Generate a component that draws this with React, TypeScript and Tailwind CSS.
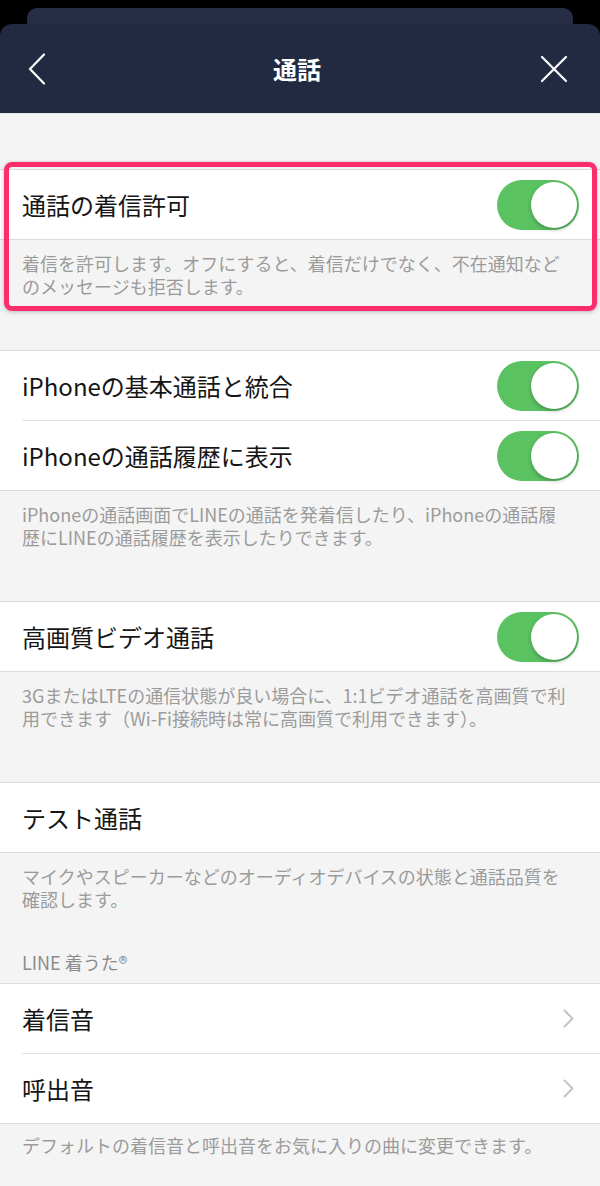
import type { FC, ReactNode } from 'react';

const FONT = "font-['Noto_Sans_CJK_JP','Noto_Sans',sans-serif]";

const Toggle: FC = () => (
  <div className="w-[82px] h-[50px] rounded-full bg-[#5bc262] relative flex-shrink-0">
    <div className="absolute right-[2px] top-[2px] w-[46px] h-[46px] rounded-full bg-white shadow-[0_2px_4px_rgba(0,0,0,0.25)]" />
  </div>
);

const Chevron: FC = () => (
  <svg width="11" height="19" viewBox="0 0 11 19" fill="none" className="flex-shrink-0">
    <path d="M1.5 1.5l8 8-8 8" stroke="#c4c4c8" strokeWidth="2" strokeLinecap="round" strokeLinejoin="round" />
  </svg>
);

const Row: FC<{ label: string; right?: ReactNode; chevron?: boolean }> = ({ label, right, chevron }) => (
  <div className={`h-[69px] flex items-center justify-between pl-[22px] ${chevron ? 'pr-[26px]' : 'pr-[21px]'}`}>
    <span className="text-[24px] text-[#151515] leading-none">{label}</span>
    {right}
  </div>
);

const Sep: FC = () => <div className="ml-[22px] h-px bg-[#e2e2e2]" />;

const Section: FC<{ children: ReactNode }> = ({ children }) => (
  <div className="bg-white border-y border-[#dcdcdc]">{children}</div>
);

const Footer: FC<{ lines: string[]; pb?: string }> = ({ lines, pb = 'pb-[52px]' }) => (
  <div className={`px-[22px] pt-[12px] ${pb} text-[18px] leading-[23px] text-[#9b9b9b]`}>
    {lines.map((l, i) => (
      <p key={i} className="whitespace-nowrap h-[23px]">{l}</p>
    ))}
  </div>
);

export default function App() {
  return (
    <div className={`w-[600px] h-[1186px] bg-black overflow-hidden ${FONT}`}>
      {/* stacked sheet behind */}
      <div className="pt-[8px]">
        <div className="mx-[27px] h-[16px] rounded-t-[10px] bg-[#272d47]" />
      </div>

      {/* header */}
      <div className="h-[90px] rounded-t-[12px] bg-[#222a42] flex items-center justify-between px-[28px] border-b border-[#e4e9f0]">
        <svg width="20" height="32" viewBox="0 0 20 32" fill="none">
          <path d="M16 1.5L2 16l14 14.5" stroke="white" strokeWidth="2.2" strokeLinecap="round" strokeLinejoin="round" />
        </svg>
        <h1 className="text-white font-bold text-[24px] leading-none ml-[6px]">通話</h1>
        <svg width="28" height="28" viewBox="0 0 28 28" fill="none" className="mr-[4px]">
          <path d="M2 2l24 24M26 2L2 26" stroke="white" strokeWidth="2.2" strokeLinecap="round" />
        </svg>
      </div>

      {/* content */}
      <div className="bg-[#f4f4f4] pt-[55px] h-full">
        <div className="relative">
          <Section>
            <Row label="通話の着信許可" right={<Toggle />} />
          </Section>
          <Footer lines={['着信を許可します。オフにすると、着信だけでなく、不在通知など', 'のメッセージも拒否します。']} />
          {/* highlight frame */}
          <div className="absolute top-[-7px] left-[4px] right-[3px] h-[149px] border-[5px] border-[#fc2d6b] rounded-[8px] shadow-[0_1px_4px_rgba(0,0,0,0.25)]" />
        </div>

        <Section>
          <Row label="iPhoneの基本通話と統合" right={<Toggle />} />
          <Sep />
          <Row label="iPhoneの通話履歴に表示" right={<Toggle />} />
        </Section>
        <Footer lines={['iPhoneの通話画面でLINEの通話を発着信したり、iPhoneの通話履', '歴にLINEの通話履歴を表示したりできます。']} />

        <Section>
          <Row label="高画質ビデオ通話" right={<Toggle />} />
        </Section>
        <Footer lines={['3GまたはLTEの通信状態が良い場合に、1:1ビデオ通話を高画質で利', '用できます（Wi-Fi接続時は常に高画質で利用できます）。']} />

        <Section>
          <Row label="テスト通話" />
        </Section>
        <Footer lines={['マイクやスピーカーなどのオーディオデバイスの状態と通話品質を', '確認します。']} pb="pb-0" />

        <div className="px-[22px] pt-[40px] pb-[10px] text-[18px] leading-[22px] text-[#8c8c8c]">LINE 着うた®</div>

        <Section>
          <Row label="着信音" right={<Chevron />} chevron />
          <Sep />
          <Row label="呼出音" right={<Chevron />} chevron />
        </Section>
        <div className="px-[22px] pt-[10px] text-[18px] leading-[23px] text-[#9b9b9b] whitespace-nowrap">
          デフォルトの着信音と呼出音をお気に入りの曲に変更できます。
        </div>
      </div>
    </div>
  );
}
